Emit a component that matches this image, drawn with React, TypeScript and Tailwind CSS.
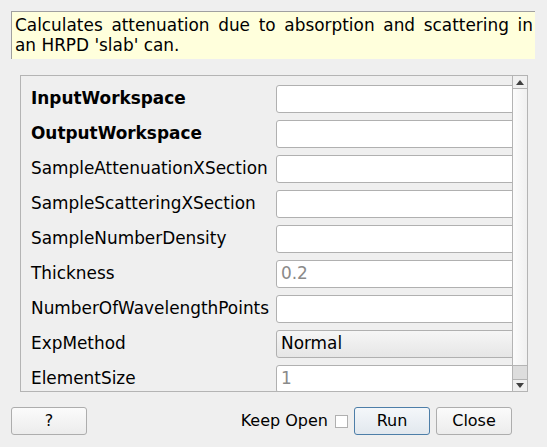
import React from "react";

const rows: { label: string; bold?: boolean; kind: "input" | "combo"; value?: string; placeholder?: boolean }[] = [
  { label: "InputWorkspace", bold: true, kind: "input" },
  { label: "OutputWorkspace", bold: true, kind: "input" },
  { label: "SampleAttenuationXSection", kind: "input" },
  { label: "SampleScatteringXSection", kind: "input" },
  { label: "SampleNumberDensity", kind: "input" },
  { label: "Thickness", kind: "input", value: "0.2", placeholder: true },
  { label: "NumberOfWavelengthPoints", kind: "input" },
  { label: "ExpMethod", kind: "combo", value: "Normal" },
  { label: "ElementSize", kind: "input", value: "1", placeholder: true },
];

export default function App() {
  return (
    <div
      className="w-[547px] h-[447px] bg-[#efefef] text-[16.9px] text-black overflow-hidden flex flex-col"
      style={{ fontFamily: '"DejaVu Sans", "Liberation Sans", sans-serif' }}
    >
      <div className="mt-[11px] ml-[11px] w-[524px] h-[48px] bg-[#ffffdc] border-t border-l border-t-[#a0a0a0] border-l-[#a0a0a0] pl-[3px] pr-[2px] pt-[3px] leading-[20px] text-justify">
        Calculates attenuation due to absorption and scattering in an HRPD 'slab' can.
      </div>

      <div className="mt-[16px] ml-[20px] w-[508px] h-[317px] border border-[#b4b4b4] flex">
        <div className="flex-1 overflow-hidden pt-[9px] pl-[10px] flex flex-col gap-[7px]">
          {rows.map((r) => (
            <div key={r.label} className="flex items-center h-[28px] shrink-0">
              <div className={`w-[245px] shrink-0 whitespace-nowrap ${r.bold ? "font-bold" : ""}`}>{r.label}</div>
              {r.kind === "input" ? (
                <div className="w-[245px] h-[28px] shrink-0 bg-white border border-[#b0b0b0] rounded-[3px] flex items-center pl-[4px] text-[#8a8a8a]">
                  {r.value ?? ""}
                </div>
              ) : (
                <div className="w-[245px] h-[28px] shrink-0 bg-gradient-to-b from-[#f6f6f6] to-[#e6e6e6] border border-[#b0b0b0] rounded-[3px] flex items-center pl-[4px] text-black">
                  {r.value}
                </div>
              )}
            </div>
          ))}
        </div>
        <div className="w-[15px] shrink-0 border-l border-[#b4b4b4] flex flex-col bg-[#f0f0f0]">
          <div className="h-[13px] border-b border-[#b4b4b4] flex items-center justify-center shrink-0">
            <svg width="8" height="5" viewBox="0 0 8 5">
              <polygon points="0,5 8,5 4,0" fill="#404040" />
            </svg>
          </div>
          <div className="flex-1 bg-gradient-to-r from-[#fcfcfc] to-[#f0f0f0] border-b border-[#b4b4b4]" />
          <div className="h-[14px] bg-[#dddddd] border-b border-[#b4b4b4] shrink-0" />
          <div className="h-[11px] flex items-center justify-center shrink-0">
            <svg width="8" height="5" viewBox="0 0 8 5">
              <polygon points="0,0 8,0 4,5" fill="#404040" />
            </svg>
          </div>
        </div>
      </div>

      <div className="mt-[15px] flex items-center h-[28px] pl-[11px] pr-[35px] text-[16px]">
        <button className="w-[76px] h-[28px] border border-[#adadad] rounded-[3px] bg-gradient-to-b from-[#fbfbfb] to-[#ececec] flex items-center justify-center">
          ?
        </button>
        <div className="flex-1" />
        <span className="mr-[7px]">Keep Open</span>
        <div className="w-[13px] h-[13px] bg-white border border-[#b0b0b0] mr-[6px]" />
        <button className="w-[76px] h-[28px] border border-[#4d7ea8] rounded-[3px] bg-gradient-to-b from-[#f4f7fa] to-[#e2e8ee] flex items-center justify-center mr-[6px]">
          Run
        </button>
        <button className="w-[76px] h-[28px] border border-[#adadad] rounded-[3px] bg-gradient-to-b from-[#fbfbfb] to-[#ececec] flex items-center justify-center">
          Close
        </button>
      </div>
    </div>
  );
}
